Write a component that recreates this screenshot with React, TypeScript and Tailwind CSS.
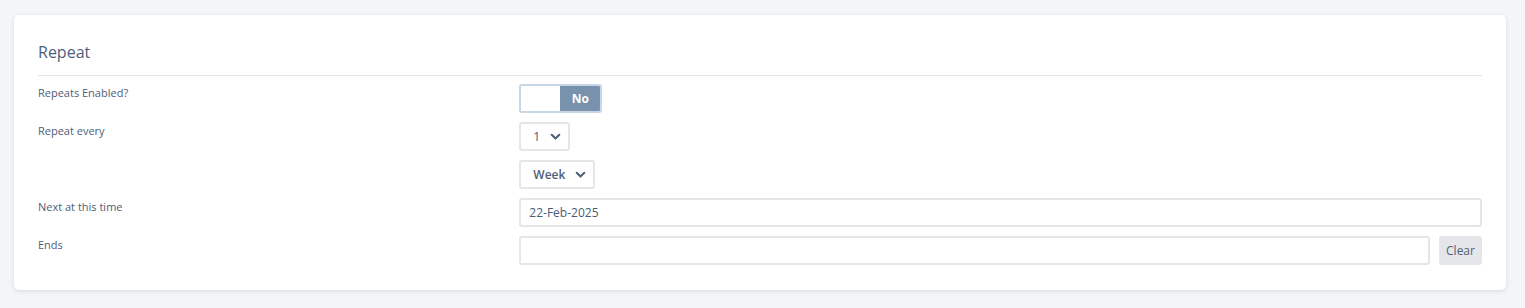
import React from "react";

const Chevron = () => (
  <svg width="11" height="11" viewBox="0 0 16 16" className="shrink-0">
    <path d="M2.5 5.5l5.5 5.5 5.5-5.5" fill="none" stroke="#4f6079" strokeWidth="3" strokeLinecap="round" strokeLinejoin="round" />
  </svg>
);

export default function App() {
  const font = { fontFamily: '"Open Sans", "Noto Sans", sans-serif' };
  return (
    <div className="min-h-[308px] w-full bg-[#f4f5f7] pt-[15px] pl-[14px] pr-[19px]" style={font}>
      <div className="rounded-[5px] bg-white shadow-[0_1px_4px_rgba(0,0,0,0.12)] px-[24px] pt-[25px] pb-[25px]">
        <div className="text-[16px] leading-[24px] text-[#4d5e7c] pb-[11px] border-b border-[#e3e5e8]">Repeat</div>
        <div className="flex flex-col gap-[9px] pt-[8px]">
          <div className="flex">
            <div className="w-1/3 text-[11px] leading-[17px] text-[#4f5d76]">Repeats Enabled?</div>
            <div className="flex-1">
              <div className="flex h-[29px] w-[83px] rounded-[3px] border-2 border-[#c8d6e6] overflow-hidden">
                <div className="flex-1 bg-white" />
                <div className="w-[40px] bg-[#7891ad] text-white text-[12px] font-bold flex items-center justify-center">No</div>
              </div>
            </div>
          </div>
          <div className="flex">
            <div className="w-1/3 text-[11px] leading-[17px] text-[#4f5d76]">Repeat every</div>
            <div className="flex-1">
              <div className="flex items-center justify-between h-[29px] w-[51px] rounded-[3px] border-2 border-[#e4e6ea] pl-[12px] pr-[7px] text-[12px] text-[#4f6079]">
                <span>1</span>
                <Chevron />
              </div>
            </div>
          </div>
          <div className="flex">
            <div className="w-1/3" />
            <div className="flex-1">
              <div className="flex items-center justify-between h-[29px] w-[76px] rounded-[3px] border-2 border-[#e4e6ea] pl-[12px] pr-[7px] text-[12px] font-semibold text-[#4f6079]">
                <span>Week</span>
                <Chevron />
              </div>
            </div>
          </div>
          <div className="flex">
            <div className="w-1/3 text-[11px] leading-[17px] text-[#4f5d76]">Next at this time</div>
            <div className="flex-1">
              <div className="flex items-center h-[29px] w-full rounded-[3px] border-2 border-[#e4e6ea] px-[8px] text-[12px] text-[#4a5b76]">
                22-Feb-2025
              </div>
            </div>
          </div>
          <div className="flex">
            <div className="w-1/3 text-[11px] leading-[17px] text-[#4f5d76]">Ends</div>
            <div className="flex-1 flex gap-[9px]">
              <div className="h-[29px] flex-1 rounded-[3px] border-2 border-[#e4e6ea]" />
              <div className="h-[29px] w-[43px] rounded-[3px] bg-[#e4e6ea] text-[12px] text-[#4f6079] flex items-center justify-center">Clear</div>
            </div>
          </div>
        </div>
      </div>
    </div>
  );
}
